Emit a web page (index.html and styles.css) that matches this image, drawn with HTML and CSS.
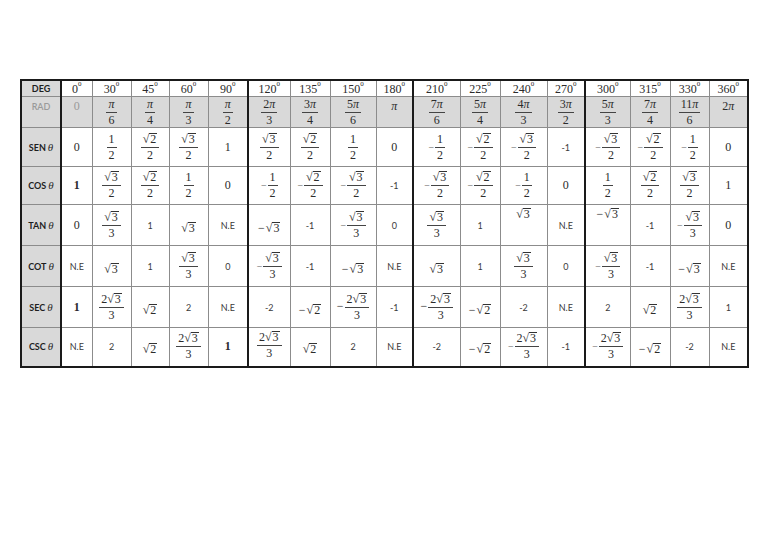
FILE: index.html
```html
<!DOCTYPE html>
<html>
<head>
<meta charset="utf-8">
<link rel="stylesheet" href="styles.css">
</head>
<body>
<div class="page">
<table class="trig">
<colgroup>
<col style="width:40px"><col style="width:31px"><col style="width:39px"><col style="width:38px"><col style="width:39px"><col style="width:40px"><col style="width:42px"><col style="width:40px"><col style="width:46px"><col style="width:37px"><col style="width:47px"><col style="width:40px"><col style="width:47px"><col style="width:38px"><col style="width:45px"><col style="width:40px"><col style="width:39px"><col style="width:39px">
</colgroup>
<tr class="r-deg">
<td><span class="lbl">DEG</span></td>
<td>0<sup>0</sup></td><td>30<sup>0</sup></td><td>45<sup>0</sup></td><td>60<sup>0</sup></td><td>90<sup>0</sup></td>
<td>120<sup>0</sup></td><td>135<sup>0</sup></td><td>150<sup>0</sup></td><td>180<sup>0</sup></td>
<td>210<sup>0</sup></td><td>225<sup>0</sup></td><td>240<sup>0</sup></td><td>270<sup>0</sup></td>
<td>300<sup>0</sup></td><td>315<sup>0</sup></td><td>330<sup>0</sup></td><td>360<sup>0</sup></td>
</tr>
<tr class="r-rad">
<td class="top"><span class="lbl grey">RAD</span></td>
<td class="top"><span class="grey">0</span></td>
<td><span class="fr"><span class="n"><i>π</i></span><span class="d">6</span></span></td>
<td><span class="fr"><span class="n"><i>π</i></span><span class="d">4</span></span></td>
<td><span class="fr"><span class="n"><i>π</i></span><span class="d">3</span></span></td>
<td><span class="fr"><span class="n"><i>π</i></span><span class="d">2</span></span></td>
<td><span class="fr"><span class="n">2<i>π</i></span><span class="d">3</span></span></td>
<td><span class="fr"><span class="n">3<i>π</i></span><span class="d">4</span></span></td>
<td><span class="fr"><span class="n">5<i>π</i></span><span class="d">6</span></span></td>
<td class="top"><i>π</i></td>
<td><span class="fr"><span class="n">7<i>π</i></span><span class="d">6</span></span></td>
<td><span class="fr"><span class="n">5<i>π</i></span><span class="d">4</span></span></td>
<td><span class="fr"><span class="n">4<i>π</i></span><span class="d">3</span></span></td>
<td><span class="fr"><span class="n">3<i>π</i></span><span class="d">2</span></span></td>
<td><span class="fr"><span class="n">5<i>π</i></span><span class="d">3</span></span></td>
<td><span class="fr"><span class="n">7<i>π</i></span><span class="d">4</span></span></td>
<td><span class="fr"><span class="n">11<i>π</i></span><span class="d">6</span></span></td>
<td class="top">2<i>π</i></td>
</tr>
<tr class="r-sen">
<td><span class="lbl">SEN</span><span class="th">θ</span></td>
<td>0</td>
<td><span class="fr"><span class="n">1</span><span class="d">2</span></span></td>
<td><span class="fr"><span class="n"><span class="sq">√<span class="ov">2</span></span></span><span class="d">2</span></span></td>
<td><span class="fr"><span class="n"><span class="sq">√<span class="ov">3</span></span></span><span class="d">2</span></span></td>
<td>1</td>
<td><span class="fr"><span class="n"><span class="sq">√<span class="ov">3</span></span></span><span class="d">2</span></span></td>
<td><span class="fr"><span class="n"><span class="sq">√<span class="ov">2</span></span></span><span class="d">2</span></span></td>
<td><span class="fr"><span class="n">1</span><span class="d">2</span></span></td>
<td>0</td>
<td><span class="neg">−</span><span class="fr"><span class="n">1</span><span class="d">2</span></span></td>
<td><span class="neg">−</span><span class="fr"><span class="n"><span class="sq">√<span class="ov">2</span></span></span><span class="d">2</span></span></td>
<td><span class="neg">−</span><span class="fr"><span class="n"><span class="sq">√<span class="ov">3</span></span></span><span class="d">2</span></span></td>
<td><span class="s">-1</span></td>
<td><span class="neg">−</span><span class="fr"><span class="n"><span class="sq">√<span class="ov">3</span></span></span><span class="d">2</span></span></td>
<td><span class="neg">−</span><span class="fr"><span class="n"><span class="sq">√<span class="ov">2</span></span></span><span class="d">2</span></span></td>
<td><span class="neg">−</span><span class="fr"><span class="n">1</span><span class="d">2</span></span></td>
<td>0</td>
</tr>
<tr class="r-cos">
<td><span class="lbl">COS</span><span class="th">θ</span></td>
<td><b>1</b></td>
<td><span class="fr"><span class="n"><span class="sq">√<span class="ov">3</span></span></span><span class="d">2</span></span></td>
<td><span class="fr"><span class="n"><span class="sq">√<span class="ov">2</span></span></span><span class="d">2</span></span></td>
<td><span class="fr"><span class="n">1</span><span class="d">2</span></span></td>
<td>0</td>
<td><span class="neg">−</span><span class="fr"><span class="n">1</span><span class="d">2</span></span></td>
<td><span class="neg">−</span><span class="fr"><span class="n"><span class="sq">√<span class="ov">2</span></span></span><span class="d">2</span></span></td>
<td><span class="neg">−</span><span class="fr"><span class="n"><span class="sq">√<span class="ov">3</span></span></span><span class="d">2</span></span></td>
<td><span class="s">-1</span></td>
<td><span class="neg">−</span><span class="fr"><span class="n"><span class="sq">√<span class="ov">3</span></span></span><span class="d">2</span></span></td>
<td><span class="neg">−</span><span class="fr"><span class="n"><span class="sq">√<span class="ov">2</span></span></span><span class="d">2</span></span></td>
<td><span class="neg">−</span><span class="fr"><span class="n">1</span><span class="d">2</span></span></td>
<td>0</td>
<td><span class="fr"><span class="n">1</span><span class="d">2</span></span></td>
<td><span class="fr"><span class="n"><span class="sq">√<span class="ov">2</span></span></span><span class="d">2</span></span></td>
<td><span class="fr"><span class="n"><span class="sq">√<span class="ov">3</span></span></span><span class="d">2</span></span></td>
<td>1</td>
</tr>
<tr class="r-tan">
<td><span class="lbl">TAN</span><span class="th">θ</span></td>
<td>0</td>
<td><span class="fr"><span class="n"><span class="sq">√<span class="ov">3</span></span></span><span class="d">3</span></span></td>
<td><span class="s">1</span></td>
<td class="low"><span class="sq">√<span class="ov">3</span></span></td>
<td><span class="s">N.E</span></td>
<td class="low"><span class="negb">−</span><span class="sq">√<span class="ov">3</span></span></td>
<td><span class="s">-1</span></td>
<td><span class="neg">−</span><span class="fr"><span class="n"><span class="sq">√<span class="ov">3</span></span></span><span class="d">3</span></span></td>
<td><span class="s">0</span></td>
<td><span class="fr"><span class="n"><span class="sq">√<span class="ov">3</span></span></span><span class="d">3</span></span></td>
<td><span class="s">1</span></td>
<td class="top"><span class="sq">√<span class="ov">3</span></span></td>
<td><span class="s">N.E</span></td>
<td class="top"><span class="negb">−</span><span class="sq">√<span class="ov">3</span></span></td>
<td><span class="s">-1</span></td>
<td><span class="neg">−</span><span class="fr"><span class="n"><span class="sq">√<span class="ov">3</span></span></span><span class="d">3</span></span></td>
<td>0</td>
</tr>
<tr class="r-cot">
<td><span class="lbl">COT</span><span class="th">θ</span></td>
<td><span class="s">N.E</span></td>
<td class="low"><span class="sq">√<span class="ov">3</span></span></td>
<td><span class="s">1</span></td>
<td><span class="fr"><span class="n"><span class="sq">√<span class="ov">3</span></span></span><span class="d">3</span></span></td>
<td><span class="s">0</span></td>
<td><span class="neg">−</span><span class="fr"><span class="n"><span class="sq">√<span class="ov">3</span></span></span><span class="d">3</span></span></td>
<td><span class="s">-1</span></td>
<td class="low"><span class="negb">−</span><span class="sq">√<span class="ov">3</span></span></td>
<td><span class="s">N.E</span></td>
<td class="low"><span class="sq">√<span class="ov">3</span></span></td>
<td><span class="s">1</span></td>
<td><span class="fr"><span class="n"><span class="sq">√<span class="ov">3</span></span></span><span class="d">3</span></span></td>
<td><span class="s">0</span></td>
<td><span class="neg">−</span><span class="fr"><span class="n"><span class="sq">√<span class="ov">3</span></span></span><span class="d">3</span></span></td>
<td><span class="s">-1</span></td>
<td class="low"><span class="negb">−</span><span class="sq">√<span class="ov">3</span></span></td>
<td><span class="s">N.E</span></td>
</tr>
<tr class="r-sec">
<td><span class="lbl">SEC</span><span class="th">θ</span></td>
<td><b>1</b></td>
<td><span class="fr"><span class="n">2<span class="sq">√<span class="ov">3</span></span></span><span class="d">3</span></span></td>
<td class="low"><span class="sq">√<span class="ov">2</span></span></td>
<td><span class="s">2</span></td>
<td><span class="s">N.E</span></td>
<td><span class="s">-2</span></td>
<td class="low"><span class="negb">−</span><span class="sq">√<span class="ov">2</span></span></td>
<td><span class="negb">−</span><span class="fr"><span class="n">2<span class="sq">√<span class="ov">3</span></span></span><span class="d">3</span></span></td>
<td><span class="s">-1</span></td>
<td><span class="negb">−</span><span class="fr"><span class="n">2<span class="sq">√<span class="ov">3</span></span></span><span class="d">3</span></span></td>
<td class="low"><span class="negb">−</span><span class="sq">√<span class="ov">2</span></span></td>
<td><span class="s">-2</span></td>
<td><span class="s">N.E</span></td>
<td><span class="s">2</span></td>
<td class="low"><span class="sq">√<span class="ov">2</span></span></td>
<td><span class="fr"><span class="n">2<span class="sq">√<span class="ov">3</span></span></span><span class="d">3</span></span></td>
<td><span class="s">1</span></td>
</tr>
<tr class="r-csc">
<td><span class="lbl">CSC</span><span class="th">θ</span></td>
<td><span class="s">N.E</span></td>
<td><span class="s">2</span></td>
<td class="low"><span class="sq">√<span class="ov">2</span></span></td>
<td><span class="fr"><span class="n">2<span class="sq">√<span class="ov">3</span></span></span><span class="d">3</span></span></td>
<td><b>1</b></td>
<td class="top"><span class="fr"><span class="n">2<span class="sq">√<span class="ov">3</span></span></span><span class="d">3</span></span></td>
<td class="low"><span class="sq">√<span class="ov">2</span></span></td>
<td><span class="s">2</span></td>
<td><span class="s">N.E</span></td>
<td><span class="s">-2</span></td>
<td class="low"><span class="negb">−</span><span class="sq">√<span class="ov">2</span></span></td>
<td><span class="neg">−</span><span class="fr"><span class="n">2<span class="sq">√<span class="ov">3</span></span></span><span class="d">3</span></span></td>
<td><span class="s">-1</span></td>
<td><span class="neg">−</span><span class="fr"><span class="n">2<span class="sq">√<span class="ov">3</span></span></span><span class="d">3</span></span></td>
<td class="low"><span class="negb">−</span><span class="sq">√<span class="ov">2</span></span></td>
<td><span class="s">-2</span></td>
<td><span class="s">N.E</span></td>
</tr>
</table>
</div>
</body>
</html>
```
FILE: styles.css
```css
html, body {
  margin: 0;
  padding: 0;
  background: #ffffff;
}
.page {
  padding: 79px 0 0 20px;
}
.trig {
  border-collapse: collapse;
  table-layout: fixed;
  width: 727px;
  border: 2px solid #1a1a1a;
  font-family: "Liberation Serif", "DejaVu Serif", serif;
  font-size: 12px;
  color: #2b2b2b;
}
.trig td {
  border: 1px solid #8c8c8c;
  padding: 0;
  text-align: center;
  vertical-align: middle;
  line-height: 13px;
  white-space: nowrap;
}
.trig td:first-child {
  background: #d9d9d9;
  border-right: 2px solid #1a1a1a;
}
.trig td:nth-child(7),
.trig td:nth-child(11),
.trig td:nth-child(15) {
  border-left: 2px solid #1a1a1a;
}
.trig td:first-child { border-left: 2px solid #1a1a1a; }
.trig td:last-child { border-right: 2px solid #1a1a1a; }
.r-csc td { border-bottom: 2px solid #1a1a1a; }
.r-deg td { border-top: 1px solid #333; }
.r-deg { height: 16px; }
.r-rad { height: 31px; }
.r-rad td { background: #d9d9d9; }
.r-sen { height: 39px; }
.r-cos { height: 38px; }
.r-tan, .r-cot, .r-sec { height: 41px; }
.r-csc { height: 39px; }
.r-deg td { line-height: 14px; }
i { font-style: italic; }
sup {
  font-size: 7px;
  vertical-align: top;
  line-height: 7px;
  position: relative;
  top: -1px;
}
.lbl {
  font-family: "Lato", "Liberation Sans", sans-serif;
  font-weight: 700;
  font-size: 9px;
  color: #1e1e1e;
}
.lbl.grey { font-weight: 600; }
.grey { color: #9a9a9a; }
.th {
  font-style: italic;
  font-size: 11px;
  margin-left: 2px;
}
.s {
  font-family: "Lato", "Liberation Sans", sans-serif;
  font-size: 9px;
  color: #3a3a3a;
}
b { font-weight: 700; }
.top { vertical-align: top !important; padding-top: 3px !important; }
.low { padding-top: 6px !important; }
.fr {
  display: inline-flex;
  flex-direction: column;
  align-items: stretch;
  vertical-align: middle;
  text-align: center;
}
.fr .n {
  border-bottom: 1px solid #444;
  padding: 0 2px 1px;
  line-height: 13px;
}
.fr .d {
  line-height: 14px;
}
.sq { white-space: nowrap; }
.ov {
  border-top: 1px solid #333;
  padding: 0 1px;
  line-height: 11px;
  display: inline-block;
}
.neg {
  font-size: 10px;
  color: #555;
  margin-right: 1px;
  vertical-align: middle;
}
.negb {
  font-size: 12px;
  margin-right: 1px;
}
```
